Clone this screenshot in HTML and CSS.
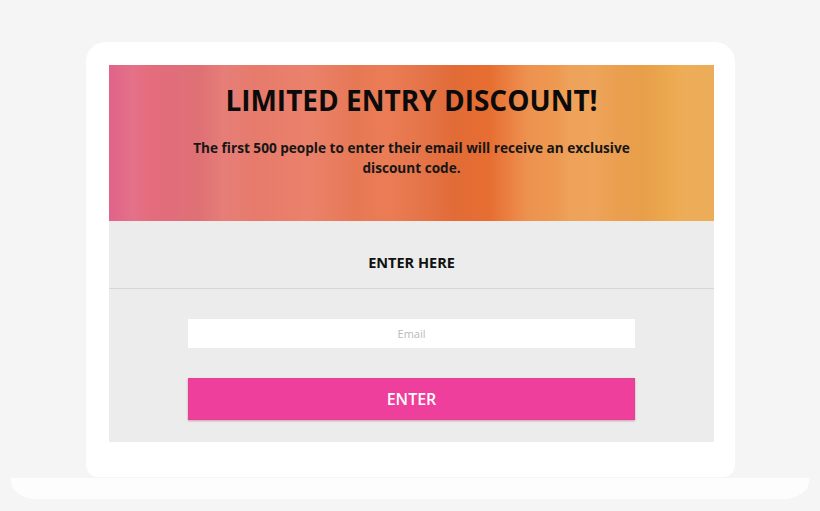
FILE: index.html
```html
<!DOCTYPE html>
<html lang="en">
<head>
<meta charset="utf-8">
<title>Limited Entry Discount</title>
<link rel="stylesheet" href="styles.css">
</head>
<body>
<div class="stage">
  <div class="laptop">
    <div class="screen">
      <div class="banner">
        <h1 class="title">LIMITED ENTRY DISCOUNT!</h1>
        <p class="lead">The first 500 people to enter their email will receive an exclusive discount code.</p>
      </div>
      <div class="panel">
        <div class="panel-head">ENTER HERE</div>
        <form class="form">
          <input class="email" type="text" placeholder="Email">
          <button class="submit" type="button">ENTER</button>
        </form>
      </div>
    </div>
  </div>
  <div class="base"></div>
</div>
</body>
</html>
```
FILE: styles.css
```css
html, body {
  margin: 0;
  padding: 0;
  background: #f5f5f5;
}
body {
  font-family: "Open Sans", "DejaVu Sans", sans-serif;
  width: 820px;
  height: 511px;
  overflow: hidden;
}
.stage {
  display: flex;
  flex-direction: column;
  align-items: flex-start;
  padding-top: 42px;
}
.laptop {
  margin-left: 86px;
  width: 649px;
  height: 435px;
  box-sizing: border-box;
  padding: 23px 21px 0 23px;
  background: #ffffff;
  border-radius: 20px 20px 12px 12px;
}
.screen {
  width: 605px;
  height: 377px;
  display: flex;
  flex-direction: column;
  background: #ececec;
}
.banner {
  height: 156px;
  box-sizing: border-box;
  padding-top: 17px;
  text-align: center;
  background:
    linear-gradient(90deg, rgba(255,255,255,0) 0%, rgba(255,255,255,0.06) 4%, rgba(255,255,255,0) 7%, rgba(0,0,0,0.02) 15%, rgba(255,255,255,0.05) 19%, rgba(255,255,255,0) 24%, rgba(255,255,255,0.05) 33%, rgba(0,0,0,0.02) 41%, rgba(255,255,255,0.04) 46%, rgba(0,0,0,0.03) 57%, rgba(255,255,255,0.08) 69%, rgba(255,255,255,0) 74%, rgba(255,255,255,0.05) 80%, rgba(0,0,0,0.02) 88%, rgba(255,255,255,0.05) 95%, rgba(255,255,255,0) 100%),
    linear-gradient(90deg, #e0638a 0%, #e46b7d 6%, #e2707a 12%, #e67a6e 22%, #e97b64 32%, #eb7a55 42%, #e87346 52%, #ea6a2a 63%, #ec8c45 70%, #eea057 76%, #ec9e4c 84%, #eda649 92%, #ecad59 100%);
}
.title {
  margin: 0;
  font-size: 28px;
  line-height: 36px;
  font-weight: 700;
  color: #0b0b0b;
  letter-spacing: 0;
}
.lead {
  margin: 20px auto 0;
  width: 470px;
  font-size: 13.6px;
  line-height: 20px;
  font-weight: 700;
  color: #161616;
}
.panel {
  flex: 1;
  display: flex;
  flex-direction: column;
}
.panel-head {
  height: 68px;
  box-sizing: border-box;
  border-bottom: 1px solid #d6d6d6;
  display: flex;
  align-items: center;
  justify-content: center;
  padding-top: 16px;
  font-size: 14.5px;
  font-weight: 700;
  color: #111;
}
.form {
  display: flex;
  flex-direction: column;
  align-items: flex-start;
  padding: 30px 0 0 79px;
  gap: 30px;
}
.email {
  width: 447px;
  height: 29px;
  box-sizing: border-box;
  border: none;
  background: #ffffff;
  text-align: center;
  font-family: "Open Sans", sans-serif;
  font-size: 11px;
  color: #333;
  outline: none;
  padding: 0;
}
.email::placeholder {
  color: #b9b9b9;
}
.submit {
  width: 447px;
  height: 42px;
  box-sizing: border-box;
  border: 1px solid #e3428f;
  background: #ef3f9c;
  color: #ffffff;
  font-family: "Open Sans", sans-serif;
  font-size: 16px;
  font-weight: 600;
  box-shadow: 0 1px 2px rgba(170, 60, 110, 0.45);
  padding: 0;
}
.base {
  margin-top: 1px;
  margin-left: 11px;
  width: 798px;
  height: 21px;
  background: #fdfdfd;
  border-radius: 0 0 26px 26px / 0 0 18px 18px;
}
```
